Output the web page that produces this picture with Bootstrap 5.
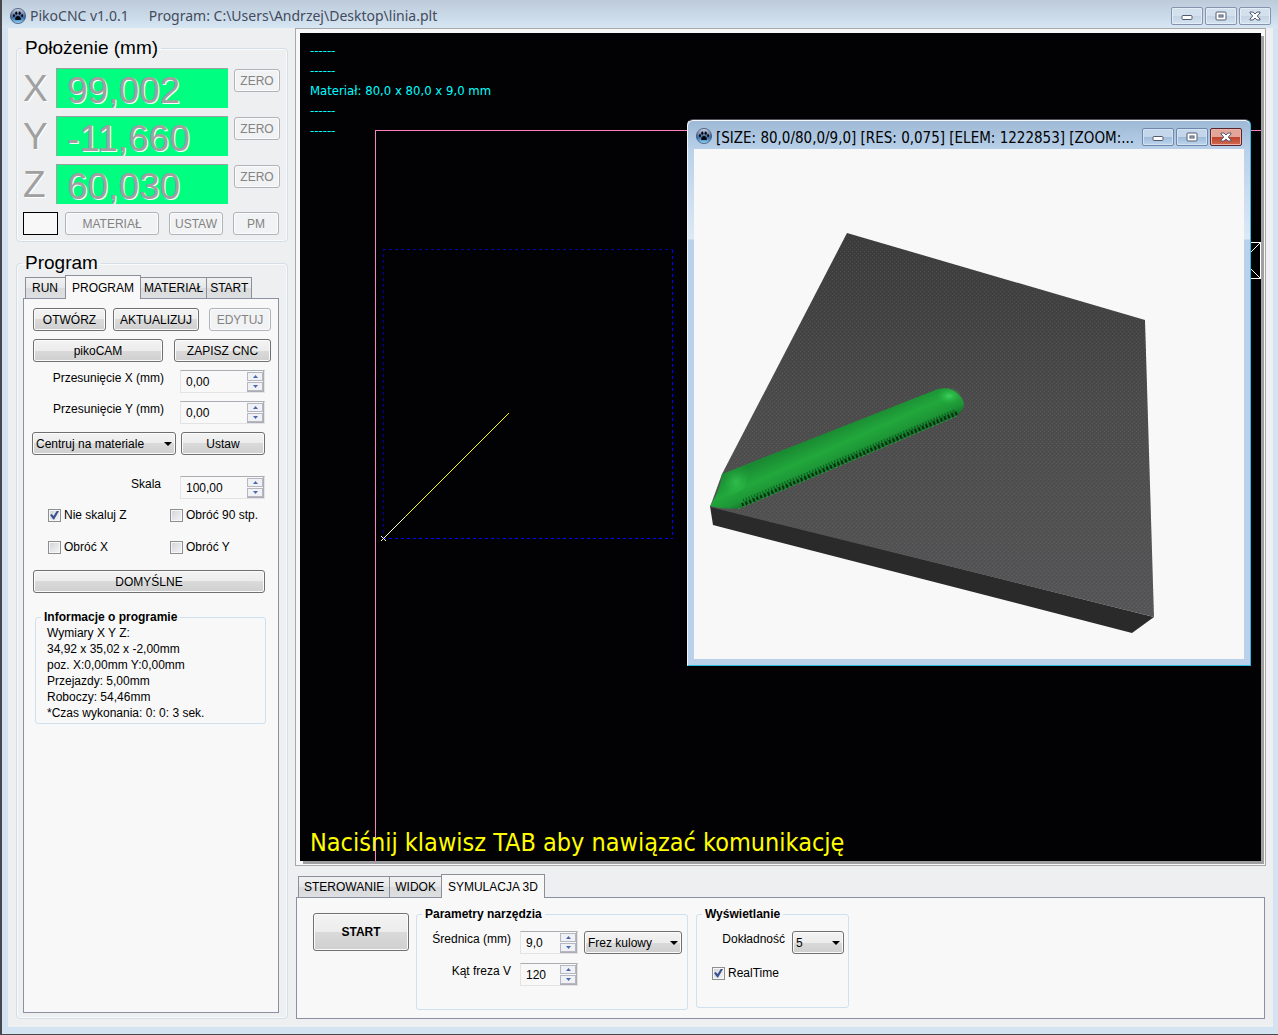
<!DOCTYPE html>
<html lang="pl">
<head>
<meta charset="utf-8">
<meta name="viewport" content="width=device-width, initial-scale=1">
<title>PikoCNC v1.0.1</title>
<link rel="stylesheet" href="https://cdn.jsdelivr.net/npm/bootstrap@5.3.0/dist/css/bootstrap.min.css">
<style>
:root{--ui:"Liberation Sans",Arial,sans-serif;--cap:"Noto Sans",Tahoma,sans-serif;--cond:"DejaVu Sans Condensed",Tahoma,sans-serif}
body{font-family:var(--ui);font-size:12px;line-height:16px;color:#000;background:#d3e3f1}
.app{min-height:100vh;border-left:2px solid #47474c;border-bottom:1px solid #47474c;padding:0 5px 7px 6px}
.app-title{height:28px;margin:0 -5px 0 -6px;padding:4px 7px 0 8px;background:linear-gradient(#bdcbd9,#c6d5e4 40%,#d6e6f3);font-family:var(--cap);font-size:14px;line-height:24px;color:#444b5c}
.app-title svg,.sim-title svg.paw{width:16px;height:16px}
.app-title .win-group{padding-top:3px}
.workspace{background:#eeeff0;gap:7px;padding:0 7px 8px 8px}
.sidebar{width:272px;padding-top:8px;gap:9px}
.work-area{min-width:0}
button{font-family:var(--ui)}
.win-btn{width:32px;height:18px;padding:0;border:1px solid #8593ad;border-radius:2px;background:linear-gradient(#d3e1ee 50%,#c3d3e3 50%,#d3e3f1);box-shadow:inset 0 0 0 1px #e3edf6;display:flex;align-items:center;justify-content:center}
.win-btn svg{width:14px;height:12px;flex:none}
.win-group{gap:2px}

/* group boxes */
.group{border:1px solid #d5dde6;border-radius:4px;box-shadow:inset 0 0 0 1px #f9fafb}
.group legend{float:none;width:auto;margin:0 0 0 6px;padding:0 3px;font-size:12px;line-height:16px;font-weight:bold}
.group legend.big{font-size:19px;line-height:24px;font-weight:normal;margin-left:-1px}
.group-plain{box-shadow:none;border-color:#cfe0ee;border-radius:3px}
.axes{padding:0 6px 6px}
.axis-list{gap:8px;padding-top:8px}
.axis-row{gap:6px;height:40px}
.axis-row label{width:27px;font-size:37px;line-height:42px;color:#a0a0a0;text-shadow:1px 1px #fff}
.axis-row input{width:172px;height:40px;border:0;border-top:1px solid #a0a0a0;border-left:1px solid #a0a0a0;border-radius:0;background:#00ff80;padding:4px 10px 0;font-size:37px;line-height:36px;color:#a0a0a0;text-shadow:1px 1px #fff}
.axis-row .push{margin-top:1px}
.swatch{width:35px;height:23px;border:1px solid #000;background:#f8f8f8;margin-right:7px}
.aux-keys{gap:10px}

/* push buttons */
.push{height:23px;padding:0;border:1px solid #707070;border-radius:3px;background:linear-gradient(#f3f3f3,#ececec 50%,#dadada 50%,#cfcfcf);box-shadow:inset 0 0 0 1px #fbfbfb;font-size:12px;line-height:16px;color:#000}
.push:disabled{border-color:#b0b3b7;background:#f1f2f3;color:#838383}
.w-zero{width:46px}.w-mat{width:94px}.w-set{width:54px}
.w-open{width:73px}.w-upd{width:86px;margin-right:3px}.w-edit{width:62px}.w-save{width:97px;margin-left:11px}
.w-run{width:96px;height:38px;margin-top:7px;font-weight:bold}

/* tabs */
.tabs{padding-left:2px;align-items:flex-end}
.tabs button{height:21px;padding:0 5px;border:1px solid #8c8e98;border-bottom:0;margin-right:-1px;margin-top:2px;background:linear-gradient(#f1f1f2,#e6e7e8 50%,#d9dadb 50%,#dedfe0);line-height:20px;font-size:12px}
.tabs button.active{height:24px;margin-top:0;margin-bottom:-1px;padding:0 6px;background:#f8f8f8;position:relative;z-index:1}
.tab-page{border:1px solid #8c90a2;background:#f8f8f8}
.program{padding:0 8px 5px 6px}
.program-tabs button{padding:0 3px}
.program-tabs button:first-child{padding:0 7px 0 6px}
.program-page{padding:9px 7px 9px 9px;gap:8px}
.inset-end{padding-right:6px}
.spin-row label,.tool-row label{line-height:16px;text-align:right}
.spin-row label{padding-right:16px}
.spin-row{padding-right:6px}
.scale-row{margin-top:13px}
.scale-row label{padding-right:19px}
.spin{width:85px;height:23px;border:1px solid #e3e3e6;border-top-color:#abadb3;background:#f8f8f8}
.spin input{min-width:0;flex:1;border:0;padding:0 5px;background:none;font-size:12px}
.spin-keys{width:17px;border:1px solid #abadb3;border-width:0 1px 1px 0;gap:1px;padding:1px 0 0}
.spin-keys button{flex:1;padding:0;border:1px solid #b5b8c2;background:#f0f1f4;display:flex;align-items:center;justify-content:center}
.spin-keys svg{width:5px;height:3px;fill:#4a68b0}
.spin-sm{width:58px}
.drop{height:23px}
.drop select{width:100%;height:23px;appearance:none;border:1px solid #707070;border-radius:3px;background:linear-gradient(#f3f3f3,#ececec 50%,#dadada 50%,#cfcfcf);box-shadow:inset 0 0 0 1px #fbfbfb;padding:0 18px 0 3px;font-size:12px;line-height:20px;color:#000}
.drop svg{position:absolute;right:4px;top:10px;width:8px;height:4px;pointer-events:none}
.drop-center{width:144px;margin:0 5px 0 -1px}.drop-tool{width:98px}.drop-acc{width:52px}
.tick{gap:3px;height:16px}
.tick input{appearance:none;width:13px;height:13px;margin:0;border:1px solid #8e8f8f;background:linear-gradient(135deg,#d0d3d8,#f6f6f6);box-shadow:inset 0 0 0 1px #f6f6f6;position:relative}
.tick input:checked::after{content:"";position:absolute;inset:1px;background:#3b5290;clip-path:polygon(0 50%,20% 38%,40% 62%,78% 0,100% 6%,46% 100%,36% 100%)}
.tick-row{padding-left:15px}
.tick-row .tick{width:122px}
.defaults{margin-top:7px}
.info{padding:0 11px 2px;margin:0 5px 0 2px}
.info legend{margin-left:-6px}
.info p{margin:0}

/* drawing view */
.view{border:1px solid #a9a7aa;background:#f8f8f8;padding:4px 1px 1px 4px;min-height:600px}
.view-inner{background:#020104;position:relative;overflow:hidden;box-shadow:3px 3px 0 #a09fa1;margin:0 3px 3px 0}
.view-inner .plot{position:absolute;inset:0;width:100%;height:100%}
.view-text{position:relative;padding:8px 10px;font-family:var(--cond);font-size:13px;line-height:20px;color:#0ff}
.prompt{position:relative;padding:0 10px 2px;font-family:var(--cond);font-size:25px;line-height:32px;color:#ff0}
.sim{position:absolute;left:387px;top:86px;width:564px;border:1px solid #2cb9e2;border-top-color:#4c4f55;border-left-color:#f2f6fa;border-radius:6px 6px 0 0;background:linear-gradient(#9db8d5,#b9d1ea 30px,#dce9f6 119px,#b9d1ea 120px);padding:0 6px 6px;box-shadow:inset 0 1px #f4f8fc}
.sim-title{height:29px;padding:8px 2px 0;font-family:var(--cond);font-size:15px;line-height:20px}
.sim-title .win-btn{border-color:#6f87ac;background:linear-gradient(#c3d6ea 50%,#9fbbd9 50%,#bdd6ee);box-shadow:inset 0 0 0 1px #d3e2f1}
.sim-title .close-btn{border-color:#5b2430;background:linear-gradient(#e3a597 48%,#bf412b 50%,#d06a50);box-shadow:inset 0 0 0 1px #e9b5a8}
.sim-name{gap:4px}
.sim svg.part{display:block;width:100%;background:#f8f8f8}

/* bottom */
.dock{margin:8px 1px 0}
.dock-page{padding:8px 16px}
.dock-page .push{flex:none}
.tool-group{width:272px;height:104px;margin-left:7px}
.show-group{width:153px;height:102px;margin-left:8px}
.dock-page legend{margin-left:5px}
.tool-rows{padding-top:9px;gap:9px}
.tool-row label{width:103px;padding-right:9px}
.tool-row .drop{margin-left:6px}
.show-row label{width:95px;padding-right:7px;text-align:right}
.show-group .tick-row{padding-top:2px}
</style>
<script src="https://cdn.jsdelivr.net/npm/bootstrap@5.3.0/dist/js/bootstrap.bundle.min.js"></script>
</head>
<body>
<svg class="position-absolute" width="0" height="0" aria-hidden="true">
  <defs><linearGradient id="ball" x1="0" y1="0" x2="0" y2="1"><stop offset="0" stop-color="#c9d3e6"/><stop offset=".45" stop-color="#6077a0"/><stop offset=".6" stop-color="#3d6fa8"/><stop offset="1" stop-color="#8fdcff"/></linearGradient></defs>
  <symbol id="paw" viewBox="0 0 16 16">
    <circle cx="8" cy="8" r="7.600" fill="url(#ball)" stroke="#35425f" stroke-width=".7"/>
    <path d="M8 8c1.600 0 2.900 1.600 2.900 2.900 0 1.500-1.700 1.100-2.900 1.100s-2.900.4-2.900-1.100C5.100 9.600 6.400 8 8 8z" fill="#05070c"/>
    <ellipse cx="6.300" cy="5.200" rx="1.100" ry="1.600" fill="#05070c"/><ellipse cx="9.700" cy="5.200" rx="1.100" ry="1.600" fill="#05070c"/>
    <ellipse cx="3.900" cy="7.700" rx="1" ry="1.400" fill="#05070c"/><ellipse cx="12.100" cy="7.700" rx="1" ry="1.400" fill="#05070c"/>
  </symbol>
  <symbol id="min" viewBox="0 0 14 12"><rect x="2" y="5.500" width="10" height="4" rx="1" fill="#fff" stroke="#535a6e"/></symbol>
  <symbol id="max" viewBox="0 0 14 12"><rect x="2" y="2" width="10" height="8" rx="1" fill="#fff" stroke="#535a6e"/><rect x="5" y="5" width="4" height="2" fill="#b9cbe0" stroke="#535a6e"/></symbol>
  <symbol id="cls" viewBox="0 0 14 12"><path d="M2 2h3l2 2 2-2h3v1L9.300 6 12 9v1H9L7 8l-2 2H2V9l2.700-3L2 3z" fill="#fff" stroke="#535a6e"/></symbol>
  <symbol id="up" viewBox="0 0 5 3"><path d="M0 3L2.500 0 5 3z"/></symbol>
  <symbol id="dn" viewBox="0 0 5 3"><path d="M0 0h5L2.500 3z"/></symbol>
  <symbol id="caret" viewBox="0 0 8 4"><path d="M0 0h8L4 4z"/></symbol>
</svg>

<div class="app d-flex flex-column">
  <header class="app-title d-flex">
    <svg class="mt-1 me-1"><use href="#paw"/></svg>
    <span class="me-3 pe-1">PikoCNC v1.0.1</span>
    <span class="flex-grow-1">Program: C:\Users\Andrzej\Desktop\linia.plt</span>
    <div class="win-group d-flex">
      <button type="button" class="win-btn" aria-label="Minimalizuj"><svg><use href="#min"/></svg></button>
      <button type="button" class="win-btn" aria-label="Maksymalizuj"><svg><use href="#max"/></svg></button>
      <button type="button" class="win-btn" aria-label="Zamknij"><svg><use href="#cls"/></svg></button>
    </div>
  </header>

  <main class="workspace d-flex flex-grow-1">
    <aside class="sidebar d-flex flex-column flex-shrink-0">
      <fieldset class="group axes">
        <legend class="big">Położenie (mm)</legend>
        <div class="axis-list d-flex flex-column">
          <div class="axis-row d-flex"><label for="px">X</label><input id="px" value="99,002" disabled><button type="button" class="push w-zero" disabled>ZERO</button></div>
          <div class="axis-row d-flex"><label for="py">Y</label><input id="py" value="-11,660" disabled><button type="button" class="push w-zero" disabled>ZERO</button></div>
          <div class="axis-row d-flex"><label for="pz">Z</label><input id="pz" value="60,030" disabled><button type="button" class="push w-zero" disabled>ZERO</button></div>
          <div class="d-flex">
            <span class="swatch"></span>
            <div class="aux-keys d-flex">
              <button type="button" class="push w-mat" disabled>MATERIAŁ</button>
              <button type="button" class="push w-set" disabled>USTAW</button>
              <button type="button" class="push w-zero" disabled>PM</button>
            </div>
          </div>
        </div>
      </fieldset>

      <fieldset class="group program d-flex flex-column flex-grow-1">
        <legend class="big">Program</legend>
        <div class="tabs program-tabs d-flex" role="tablist">
          <button type="button" role="tab">RUN</button><button type="button" role="tab" class="active" aria-selected="true">PROGRAM</button><button type="button" role="tab">MATERIAŁ</button><button type="button" role="tab">START</button>
        </div>
        <div class="tab-page program-page d-flex flex-column flex-grow-1">
          <div class="d-flex justify-content-between">
            <button type="button" class="push w-open">OTWÓRZ</button>
            <button type="button" class="push w-upd">AKTUALIZUJ</button>
            <button type="button" class="push w-edit" disabled>EDYTUJ</button>
          </div>
          <div class="d-flex">
            <button type="button" class="push flex-fill">pikoCAM</button>
            <button type="button" class="push w-save">ZAPISZ CNC</button>
          </div>
          <div class="spin-row d-flex justify-content-end"><label for="ox">Przesunięcie X (mm)</label>
            <div class="spin d-flex"><input id="ox" value="0,00"><div class="spin-keys d-flex flex-column"><button type="button" aria-label="Więcej"><svg><use href="#up"/></svg></button><button type="button" aria-label="Mniej"><svg><use href="#dn"/></svg></button></div></div></div>
          <div class="spin-row d-flex justify-content-end"><label for="oy">Przesunięcie Y (mm)</label>
            <div class="spin d-flex"><input id="oy" value="0,00"><div class="spin-keys d-flex flex-column"><button type="button" aria-label="Więcej"><svg><use href="#up"/></svg></button><button type="button" aria-label="Mniej"><svg><use href="#dn"/></svg></button></div></div></div>
          <div class="d-flex inset-end">
            <div class="drop drop-center position-relative"><select aria-label="Wyrównanie"><option>Centruj na materiale</option></select><svg><use href="#caret"/></svg></div>
            <button type="button" class="push flex-fill">Ustaw</button>
          </div>
          <div class="spin-row scale-row d-flex justify-content-end"><label for="sc">Skala</label>
            <div class="spin d-flex"><input id="sc" value="100,00"><div class="spin-keys d-flex flex-column"><button type="button" aria-label="Więcej"><svg><use href="#up"/></svg></button><button type="button" aria-label="Mniej"><svg><use href="#dn"/></svg></button></div></div></div>
          <div class="tick-row d-flex">
            <label class="tick d-flex align-items-center"><input type="checkbox" checked>Nie skaluj Z</label>
            <label class="tick d-flex align-items-center text-nowrap w-auto"><input type="checkbox">Obróć 90 stp.</label>
          </div>
          <div class="tick-row d-flex mt-2">
            <label class="tick d-flex align-items-center"><input type="checkbox">Obróć X</label>
            <label class="tick d-flex align-items-center w-auto"><input type="checkbox">Obróć Y</label>
          </div>
          <div class="d-flex inset-end defaults"><button type="button" class="push w-100">DOMYŚLNE</button></div>
          <fieldset class="group group-plain info mt-2">
            <legend>Informacje o programie</legend>
            <p>Wymiary X Y Z:</p>
            <p>34,92 x 35,02 x -2,00mm</p>
            <p>poz. X:0,00mm Y:0,00mm</p>
            <p>Przejazdy: 5,00mm</p>
            <p>Roboczy: 54,46mm</p>
            <p>*Czas wykonania: 0: 0: 3 sek.</p>
          </fieldset>
        </div>
      </fieldset>
    </aside>

    <section class="work-area d-flex flex-column flex-grow-1">
      <div class="view d-flex flex-grow-1">
        <div class="view-inner d-flex flex-column justify-content-between flex-grow-1">
          <svg class="plot" fill="none" shape-rendering="crispEdges">
            <path d="M75.500 2000V97.500H4000" stroke="#ff80c0"/>
            <path d="M372.500 216.500V505.500H83.500" stroke="#00f" stroke-dasharray="3 3"/>
            <path d="M83.500 505.500V216.500H372.500" stroke="#0000a8" stroke-dasharray="3 3"/>
            <g shape-rendering="auto">
              <path d="M105.500 483.500L209 380" stroke="#ff0"/>
              <path d="M81 503l5 5M81 508L105.500 483.500" stroke="#ffffc0"/>
            </g>
            <path d="M940 209.500H960.500V245.500H940M951 219l9-9M951 236l9 9" stroke="#fff"/>
          </svg>
          <div class="view-text"><div>------</div><div>------</div><div>Materiał: 80,0 x 80,0 x 9,0 mm</div><div>------</div><div>------</div></div>
          <div class="prompt">Naciśnij klawisz TAB aby nawiązać komunikację</div>

          <div class="sim">
            <div class="sim-title d-flex justify-content-between">
              <div class="sim-name d-flex text-nowrap"><svg class="paw"><use href="#paw"/></svg><span>[SIZE: 80,0/80,0/9,0] [RES: 0,075] [ELEM: 1222853] [ZOOM:...</span></div>
              <div class="win-group d-flex flex-shrink-0">
                <button type="button" class="win-btn" aria-label="Minimalizuj"><svg><use href="#min"/></svg></button>
                <button type="button" class="win-btn" aria-label="Maksymalizuj"><svg><use href="#max"/></svg></button>
                <button type="button" class="win-btn close-btn" aria-label="Zamknij"><svg><use href="#cls"/></svg></button>
              </div>
            </div>
            <svg class="part" viewBox="0 0 550 510">
              <defs>
                <linearGradient id="top" x1="0" y1="0" x2="0" y2="1"><stop offset="0" stop-color="#3b3b3b"/><stop offset=".45" stop-color="#4b4b4b"/><stop offset="1" stop-color="#555557"/></linearGradient>
                <linearGradient id="groove" gradientUnits="userSpaceOnUse" x1="138" y1="281" x2="157" y2="324"><stop offset="0" stop-color="#1a8a32"/><stop offset=".35" stop-color="#22a83c"/><stop offset=".6" stop-color="#1d9636"/><stop offset=".75" stop-color="#14752a"/><stop offset="1" stop-color="#0c4a1a"/></linearGradient>
                <radialGradient id="tip"><stop offset="0" stop-color="#3cd35c"/><stop offset="1" stop-color="#22a83c" stop-opacity="0"/></radialGradient>
                <pattern id="grain" width="4" height="4" patternUnits="userSpaceOnUse"><path d="M0 0h1v1H0zM2 2h1v1H2z" fill="#fff" opacity=".07"/></pattern>
              </defs>
              <path d="M16 357L460 468 438 484 19 376z" fill="#2a2a2a"/>
              <path d="M153 84L451 171 460 468 16 358 28 325z" fill="url(#top)"/>
              <path d="M153 84L451 171 460 468 16 358 28 325z" fill="url(#grain)"/>
              <path d="M28 325L244 240Q256 237 264 245 272 252 269 259 268 263 262 267L46 359Q30 361 16 357 26 342 28 325z" fill="url(#groove)"/>
              <path d="M28 325L60 313 50 340 24 353z" fill="url(#tip)" opacity=".6"/>
              <ellipse cx="255" cy="247" rx="13" ry="9" fill="url(#tip)"/>
              <path d="M263 264L46 357" fill="none" stroke="#07300f" stroke-width="4" stroke-dasharray="2 2"/>
              <path d="M260 262L48 352" fill="none" stroke="#0d5a1e" stroke-width="3" stroke-dasharray="1 2"/>
              <path d="M263 267L44 360" fill="none" stroke="#1f9d39" stroke-width="1" stroke-dasharray="3 2"/>
            </svg>
          </div>
        </div>
      </div>

      <div class="dock">
        <div class="tabs d-flex" role="tablist">
          <button type="button" role="tab">STEROWANIE</button><button type="button" role="tab">WIDOK</button><button type="button" role="tab" class="active" aria-selected="true">SYMULACJA 3D</button>
        </div>
        <div class="tab-page dock-page d-flex align-items-start">
          <button type="button" class="push w-run">START</button>
          <fieldset class="group group-plain tool-group">
            <legend>Parametry narzędzia</legend>
            <div class="tool-rows d-flex flex-column">
              <div class="tool-row d-flex"><label for="dia">Średnica (mm)</label>
                <div class="spin spin-sm d-flex"><input id="dia" value="9,0"><div class="spin-keys d-flex flex-column"><button type="button" aria-label="Więcej"><svg><use href="#up"/></svg></button><button type="button" aria-label="Mniej"><svg><use href="#dn"/></svg></button></div></div>
                <div class="drop drop-tool position-relative"><select aria-label="Rodzaj narzędzia"><option>Frez kulowy</option></select><svg><use href="#caret"/></svg></div></div>
              <div class="tool-row d-flex"><label for="ang">Kąt freza V</label>
                <div class="spin spin-sm d-flex"><input id="ang" value="120"><div class="spin-keys d-flex flex-column"><button type="button" aria-label="Więcej"><svg><use href="#up"/></svg></button><button type="button" aria-label="Mniej"><svg><use href="#dn"/></svg></button></div></div></div>
            </div>
          </fieldset>
          <fieldset class="group group-plain show-group">
            <legend>Wyświetlanie</legend>
            <div class="tool-rows d-flex flex-column">
              <div class="show-row d-flex"><label for="acc">Dokładność</label>
                <div class="drop drop-acc position-relative"><select id="acc"><option>5</option></select><svg><use href="#caret"/></svg></div></div>
              <div class="tick-row d-flex"><label class="tick d-flex align-items-center"><input type="checkbox" checked>RealTime</label></div>
            </div>
          </fieldset>
        </div>
      </div>
    </section>
  </main>
</div>
</body>
</html>
